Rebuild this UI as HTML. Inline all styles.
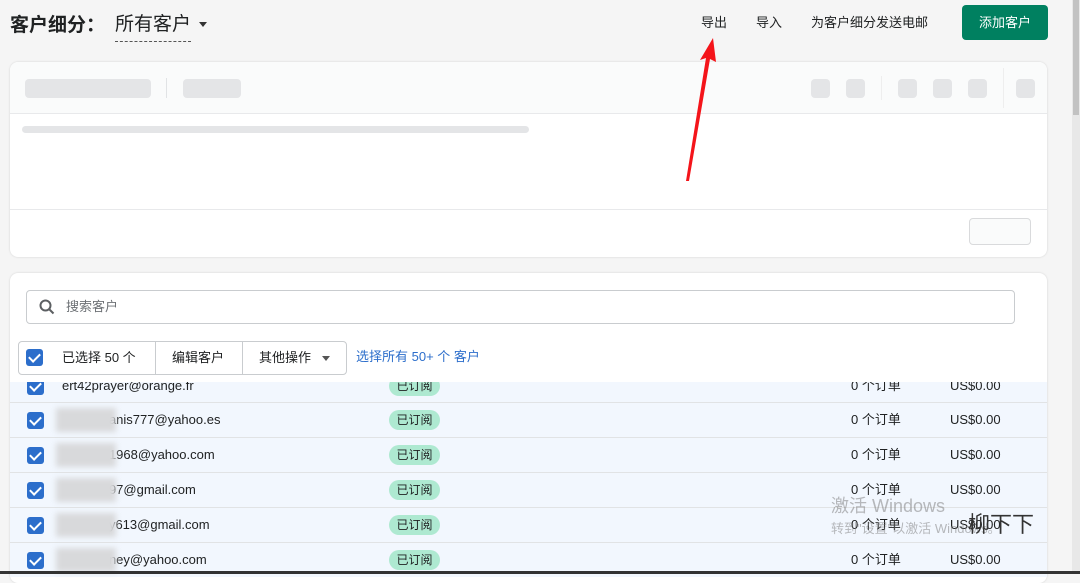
<!DOCTYPE html>
<html><head><meta charset="utf-8"><style>
*{margin:0;padding:0;box-sizing:border-box}
body{width:1080px;height:574px;overflow:hidden;background:#f5f5f5;font-family:"Liberation Sans","Noto Sans CJK SC",sans-serif;color:#202223;position:relative}
.a{position:absolute}
.sk{position:absolute;background:#e4e5e7;border-radius:4px}
.cb{position:absolute;width:17px;height:17px;background:#2c6ecb;border-radius:3px}
.cb:after{content:"";position:absolute;left:5px;top:2px;width:5px;height:9px;border:solid #fff;border-width:0 2px 2px 0;transform:rotate(45deg)}
.row{position:absolute;left:10px;width:1037px;height:35px;background:#f2f7fe;border-top:1px solid #e1e3e5;font-size:13px;line-height:34px}
.row .cb{left:17px;top:9px}
.row .em{position:absolute;left:52px;top:0}
.row .bl{position:absolute;left:46px;top:5px;width:60px;height:24px;background:#d8d9db;filter:blur(3px)}
.row .bd{position:absolute;left:379px;top:7px;width:51px;height:20px;border-radius:10px;background:#aee9d1;font-size:12px;text-align:center;line-height:20px}
.row .o{position:absolute;left:841px;top:0}
.row .u{position:absolute;left:940px;top:0}
</style></head><body>
<div class="a" style="left:10px;top:14px;font-size:19px;font-weight:bold;line-height:24px">客户细分：</div>
<div class="a" style="left:115px;top:13px;font-size:19px;line-height:24px;border-bottom:1px dashed #555;padding-bottom:4px">所有客户</div>
<div class="a" style="left:199px;top:22px;border:4px solid transparent;border-top:5px solid #333"></div>
<div class="a" style="left:701px;top:14px;font-size:13px;line-height:18px">导出</div>
<div class="a" style="left:756px;top:14px;font-size:13px;line-height:18px">导入</div>
<div class="a" style="left:811px;top:14px;font-size:13px;line-height:18px">为客户细分发送电邮</div>
<div class="a" style="left:962px;top:5px;width:86px;height:35px;background:#008060;border-radius:4px;color:#fff;font-size:13px;text-align:center;line-height:35px">添加客户</div>
<div class="a" style="left:1072px;top:0;width:8px;height:574px;background:#e8e8e8"></div>
<div class="a" style="left:1073px;top:0;width:6px;height:115px;background:#c2c2c2"></div>
<div class="a" style="left:10px;top:62px;width:1037px;height:195px;background:#fff;border-radius:8px;box-shadow:0 0 2px rgba(0,0,0,.15);overflow:hidden">
 <div class="a" style="left:0;top:0;width:1037px;height:52px;background:#fafbfb;border-bottom:1px solid #e8e9eb"></div>
 <div class="sk" style="left:15px;top:17px;width:126px;height:19px"></div>
 <div class="a" style="left:156px;top:16px;width:1px;height:20px;background:#e1e3e5"></div>
 <div class="sk" style="left:173px;top:17px;width:58px;height:19px"></div>
 <div class="sk" style="left:801px;top:17px;width:19px;height:19px"></div>
 <div class="sk" style="left:836px;top:17px;width:19px;height:19px"></div>
 <div class="a" style="left:871px;top:14px;width:1px;height:24px;background:#eee"></div>
 <div class="sk" style="left:888px;top:17px;width:19px;height:19px"></div>
 <div class="sk" style="left:923px;top:17px;width:19px;height:19px"></div>
 <div class="sk" style="left:958px;top:17px;width:19px;height:19px"></div>
 <div class="a" style="left:993px;top:6px;width:1px;height:40px;background:#eee"></div>
 <div class="sk" style="left:1006px;top:17px;width:19px;height:19px"></div>
 <div class="sk" style="left:12px;top:64px;width:507px;height:7px"></div>
 <div class="a" style="left:0;top:147px;width:1037px;height:1px;background:#e8e9eb"></div>
 <div class="a" style="left:959px;top:156px;width:62px;height:27px;border:1px solid #d9dadc;border-radius:4px;background:#fafbfb"></div>
</div>
<div class="a" style="left:10px;top:273px;width:1037px;height:310px;background:#fff;border-radius:8px;box-shadow:0 0 2px rgba(0,0,0,.15)"></div>
<div class="a" style="left:26px;top:290px;width:989px;height:34px;border:1px solid #c9cccf;border-radius:4px;background:#fff"></div>
<svg class="a" style="left:39px;top:299px" width="16" height="16" viewBox="0 0 16 16"><circle cx="6.5" cy="6.5" r="5" fill="none" stroke="#5c5f62" stroke-width="2"/><path d="M10 10l4.5 4.5" stroke="#5c5f62" stroke-width="2"/></svg>
<div class="a" style="left:66px;top:298px;font-size:13px;line-height:18px;color:#6d7175">搜索客户</div>
<div class="row" style="top:368px"><div class="cb"></div><div class="em">ert42prayer@orange.fr</div><div class="bd">已订阅</div><div class="o">0 个订单</div><div class="u">US$0.00</div></div>
<div class="row" style="top:402px"><div class="cb"></div><div class="em">&nbsp;&nbsp;&nbsp;&nbsp;&nbsp;&nbsp;&nbsp;&nbsp;&nbsp;&nbsp;&nbsp;&nbsp;&nbsp;anis777@yahoo.es</div><div class="bl"></div><div class="bd">已订阅</div><div class="o">0 个订单</div><div class="u">US$0.00</div></div>
<div class="row" style="top:437px"><div class="cb"></div><div class="em">&nbsp;&nbsp;&nbsp;&nbsp;&nbsp;&nbsp;&nbsp;&nbsp;&nbsp;&nbsp;&nbsp;&nbsp;&nbsp;1968@yahoo.com</div><div class="bl"></div><div class="bd">已订阅</div><div class="o">0 个订单</div><div class="u">US$0.00</div></div>
<div class="row" style="top:472px"><div class="cb"></div><div class="em">&nbsp;&nbsp;&nbsp;&nbsp;&nbsp;&nbsp;&nbsp;&nbsp;&nbsp;&nbsp;&nbsp;&nbsp;&nbsp;97@gmail.com</div><div class="bl"></div><div class="bd">已订阅</div><div class="o">0 个订单</div><div class="u">US$0.00</div></div>
<div class="row" style="top:507px"><div class="cb"></div><div class="em">&nbsp;&nbsp;&nbsp;&nbsp;&nbsp;&nbsp;&nbsp;&nbsp;&nbsp;&nbsp;&nbsp;&nbsp;&nbsp;y613@gmail.com</div><div class="bl"></div><div class="bd">已订阅</div><div class="o">0 个订单</div><div class="u">US$0.00</div></div>
<div class="row" style="top:542px"><div class="cb"></div><div class="em">&nbsp;&nbsp;&nbsp;&nbsp;&nbsp;&nbsp;&nbsp;&nbsp;&nbsp;&nbsp;&nbsp;&nbsp;&nbsp;ney@yahoo.com</div><div class="bl"></div><div class="bd">已订阅</div><div class="o">0 个订单</div><div class="u">US$0.00</div></div>
<div class="a" style="left:10px;top:330px;width:1037px;height:52px;background:#fff"></div>
<div class="a" style="left:18px;top:341px;width:329px;height:34px;border:1px solid #c9cccf;border-radius:4px;background:#fff;font-size:13px;line-height:32px">
 <div class="cb" style="left:7px;top:7px"></div>
 <div class="a" style="left:43px;top:0">已选择 50 个</div>
 <div class="a" style="left:136px;top:0;width:1px;height:32px;background:#c9cccf"></div>
 <div class="a" style="left:153px;top:0">编辑客户</div>
 <div class="a" style="left:223px;top:0;width:1px;height:32px;background:#c9cccf"></div>
 <div class="a" style="left:240px;top:0">其他操作</div>
 <div class="a" style="left:303px;top:14px;border:4px solid transparent;border-top:5px solid #555"></div>
</div>
<div class="a" style="left:356px;top:348px;font-size:13px;line-height:18px;color:#2c6ecb">选择所有 50+ 个 客户</div>
<div class="a" style="left:0;top:571px;width:1080px;height:3px;background:#333"></div>
<svg class="a" style="left:0;top:0" width="1080" height="574"><path d="M686 181 L706 58 L700 60 L713 38 L716 62 L710 59 L689 181 Z" fill="#f4141a"/></svg>
<div class="a" style="left:831px;top:495px;font-size:18px;line-height:22px;color:rgba(120,120,120,.5)">激活 Windows</div>
<div class="a" style="left:831px;top:521px;font-size:13px;line-height:16px;color:rgba(120,120,120,.5)">转到"设置"以激活 Windows。</div>
<div class="a" style="left:968px;top:512px;font-size:22px;line-height:26px;color:#333">柳下下</div>
</body></html>
